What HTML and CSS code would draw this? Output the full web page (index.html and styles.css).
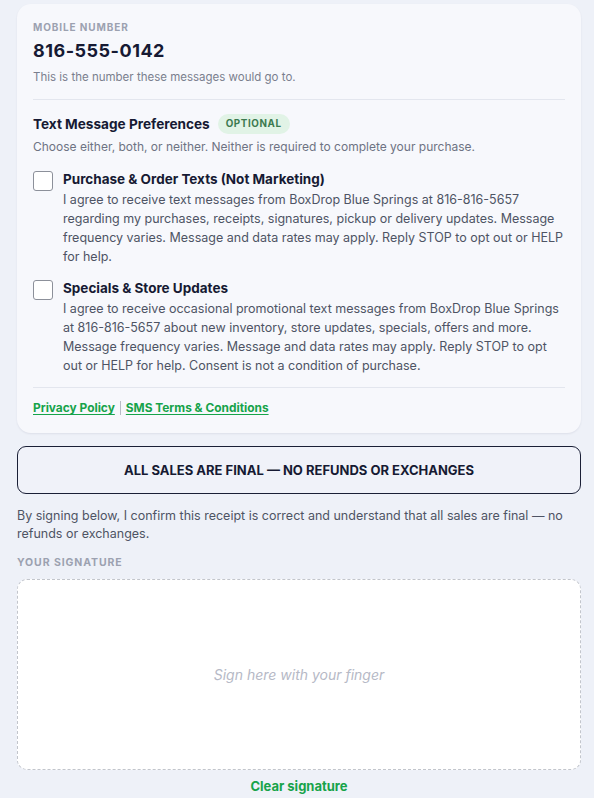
FILE: index.html
```html
<!DOCTYPE html>
<html lang="en">
<head>
<meta charset="utf-8">
<title>Receipt signature</title>
<link rel="stylesheet" href="styles.css">
</head>
<body>
<main class="page">
  <section class="card">
    <div class="label">MOBILE NUMBER</div>
    <div class="phone">816-555-0142</div>
    <p class="hint">This is the number these messages would go to.</p>
    <hr class="divider">
    <div class="prefs-head">
      <h2 class="prefs-title">Text Message Preferences</h2>
      <span class="badge">OPTIONAL</span>
    </div>
    <p class="prefs-sub">Choose either, both, or neither. Neither is required to complete your purchase.</p>
    <label class="opt">
      <span class="box"></span>
      <span class="opt-text">
        <span class="opt-title">Purchase &amp; Order Texts (Not Marketing)</span>
        <span class="opt-body">I agree to receive text messages from BoxDrop Blue Springs at 816-816-5657 regarding my purchases, receipts, signatures, pickup or delivery updates. Message frequency varies. Message and data rates may apply. Reply STOP to opt out or HELP for help.</span>
      </span>
    </label>
    <label class="opt">
      <span class="box"></span>
      <span class="opt-text">
        <span class="opt-title">Specials &amp; Store Updates</span>
        <span class="opt-body">I agree to receive occasional promotional text messages from BoxDrop Blue Springs at 816-816-5657 about new inventory, store updates, specials, offers and more. Message frequency varies. Message and data rates may apply. Reply STOP to opt out or HELP for help. Consent is not a condition of purchase.</span>
      </span>
    </label>
    <hr class="divider divider-bottom">
    <div class="links">
      <a href="#" class="link">Privacy Policy</a><span class="sep"></span><a href="#" class="link">SMS Terms &amp; Conditions</a>
    </div>
  </section>

  <div class="final">ALL SALES ARE FINAL — NO REFUNDS OR EXCHANGES</div>
  <p class="confirm">By signing below, I confirm this receipt is correct and understand that all sales are final — no refunds or exchanges.</p>
  <div class="label sig-label">YOUR SIGNATURE</div>
  <div class="sig-pad"><span class="sig-placeholder">Sign here with your finger</span></div>
  <div class="clear-wrap"><a href="#" class="clear">Clear signature</a></div>
</main>
</body>
</html>
```
FILE: styles.css
```css
* { box-sizing: border-box; }
html, body { margin: 0; padding: 0; }
body {
  background: #eef1f8;
  font-family: Inter, "Noto Sans", "Liberation Sans", sans-serif;
  color: #1a1f36;
}
.page {
  padding: 4px 13px 0 17px;
}
.card {
  background: #f7f8fc;
  border-radius: 14px;
  padding: 16px 16px 17px 16px;
  box-shadow: 0 1px 2px rgba(20, 30, 60, 0.08);
}
.label {
  font-size: 10px;
  font-weight: 700;
  letter-spacing: 0.9px;
  color: #9ca1b0;
  line-height: 14px;
}
.phone {
  margin-top: 6px;
  font-size: 18px;
  font-weight: 700;
  letter-spacing: 0.5px;
  line-height: 22px;
  color: #161a33;
}
.hint {
  margin: 8px 0 0;
  font-size: 11.5px;
  line-height: 15px;
  color: #7a7f8e;
}
.divider {
  border: 0;
  border-top: 1px solid #e3e6ee;
  margin: 14px 0 0;
}
.prefs-head {
  display: flex;
  align-items: center;
  gap: 8px;
  margin-top: 14px;
}
.prefs-title {
  margin: 0;
  font-size: 13.6px;
  font-weight: 700;
  line-height: 20px;
  color: #161a33;
}
.badge {
  background: #e1f3e6;
  color: #3c7a50;
  font-size: 9.8px;
  font-weight: 700;
  letter-spacing: 0.6px;
  padding: 4px 8px;
  border-radius: 10px;
  line-height: 12px;
}
.prefs-sub {
  margin: 5px 0 0;
  font-size: 12px;
  line-height: 16px;
  color: #6e7383;
}
.opt {
  display: flex;
  gap: 10px;
  margin-top: 15px;
}
.opt + .opt { margin-top: 13px; }
.box {
  flex: none;
  width: 20px;
  height: 20px;
  border: 1.5px solid #8c909a;
  border-radius: 3px;
  background: #fff;
  margin-top: 1px;
}
.opt-text { display: flex; flex-direction: column; }
.opt-title {
  font-size: 13.5px;
  font-weight: 700;
  line-height: 18px;
  color: #161a33;
}
.opt-body {
  margin-top: 2px;
  font-size: 12.5px;
  line-height: 19px;
  color: #4e5464;
}
.divider-bottom { margin-top: 12px; }
.links {
  display: flex;
  align-items: center;
  margin-top: 12px;
  line-height: 16px;
}
.link {
  font-size: 11.9px;
  font-weight: 700;
  color: #16a34a;
  text-decoration: underline;
  text-underline-offset: 2px;
}
.sep {
  display: inline-block;
  width: 1px;
  height: 14px;
  background: #b8bcc6;
  margin: 0 5px;
}
.final {
  margin-top: 13px;
  height: 48px;
  border: 1px solid #1a1f36;
  border-radius: 9px;
  display: flex;
  align-items: center;
  justify-content: center;
  font-size: 13px;
  font-weight: 700;
  color: #161a33;
  background: #f0f2f9;
}
.confirm {
  margin: 13px 0 0;
  font-size: 12.5px;
  line-height: 18px;
  color: #4e5464;
}
.sig-label {
  margin-top: 13px;
  font-size: 10.5px;
}
.sig-pad {
  margin-top: 9px;
  height: 191px;
  background: #fff;
  border: 1px dashed #c2c5cc;
  border-radius: 10px;
  display: flex;
  align-items: center;
  justify-content: center;
}
.sig-placeholder {
  font-style: italic;
  font-size: 14px;
  color: #b6b9c6;
}
.clear-wrap {
  text-align: center;
  margin-top: 8px;
  font-size: 13px;
  line-height: 16px;
}
.clear {
  font-size: 13px;
  font-weight: 700;
  color: #16a34a;
  text-decoration: none;
}
```
